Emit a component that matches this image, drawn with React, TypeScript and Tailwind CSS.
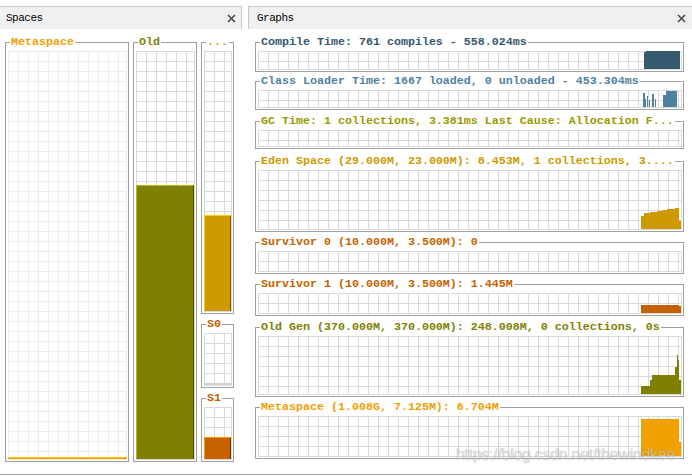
import React from "react";

const mono = "font-['Liberation_Mono','DejaVu_Sans_Mono',monospace]";

const gridDark =
  "bg-[linear-gradient(to_right,#d9d9d9_1px,transparent_1px),linear-gradient(to_bottom,#d9d9d9_1px,transparent_1px)] bg-[length:10px_10px] border-r border-b border-[#d9d9d9]";
const gridLight =
  "bg-[linear-gradient(to_right,#ececec_1px,transparent_1px),linear-gradient(to_bottom,#ececec_1px,transparent_1px)] bg-[length:10px_10px] border-r border-b border-[#ececec]";

function CloseIcon() {
  return (
    <svg width="9" height="9" viewBox="0 0 9 9">
      <path d="M1 1L8 8M8 1L1 8" stroke="#4a4a4a" strokeWidth="1.6" />
    </svg>
  );
}

function Legend({ text, color }: { text: string; color: string }) {
  return (
    <legend
      className={`ml-[4px] px-[1px] leading-[12px] text-[11.67px] font-bold whitespace-pre ${mono} ${color}`}
    >
      {text}
    </legend>
  );
}

function SpaceBox({
  label,
  color,
  className,
  gridH,
  grid,
  children,
}: {
  label: string;
  color: string;
  className: string;
  gridH: string;
  grid: string;
  children?: React.ReactNode;
}) {
  return (
    <fieldset className={`border border-[#a0a0a0] min-w-0 ${className}`}>
      <Legend text={label} color={color} />
      <div className="pt-[3px] pl-[2px] pr-[1px] pb-[1px]">
        <div className={`${gridH} flex flex-col justify-end ${grid}`}>{children}</div>
      </div>
    </fieldset>
  );
}

type G = {
  label: string;
  color: string;
  mt: string;
  h: string;
  ch: number;
  fill: React.ReactNode;
};

const graphs: G[] = [
  {
    label: "Compile Time: 761 compiles - 558.024ms",
    color: "text-[#36566e]",
    mt: "mt-0",
    h: "h-[19px]",
    ch: 18,
    fill: <path d="M5 18V1H7V0H41V18Z" fill="#35596d" />,
  },
  {
    label: "Class Loader Time: 1667 loaded, 0 unloaded - 453.304ms",
    color: "text-[#4f80a0]",
    mt: "mt-[3px]",
    h: "h-[18px]",
    ch: 17,
    fill: (
      <g fill="#4f80a0">
        <rect x="4" y="3" width="2" height="14" />
        <rect x="6" y="9" width="1" height="8" />
        <rect x="8" y="6" width="1" height="11" />
        <rect x="10" y="10" width="1" height="7" />
        <rect x="13" y="4" width="2" height="13" />
        <rect x="16" y="9" width="1" height="8" />
        <rect x="24" y="5" width="3" height="12" />
        <rect x="27" y="1" width="11" height="16" />
      </g>
    ),
  },
  {
    label: "GC Time: 1 collections, 3.381ms Last Cause: Allocation F...",
    color: "text-[#999900]",
    mt: "mt-[5px]",
    h: "h-[17px]",
    ch: 16,
    fill: null,
  },
  {
    label: "Eden Space (29.000M, 23.000M): 8.453M, 1 collections, 3....",
    color: "text-[#cc9900]",
    mt: "mt-[6px]",
    h: "h-[60px]",
    ch: 59,
    fill: (
      <polygon
        points="2,59 2,46 5,46 5,43 11,43 11,42 18,42 18,41 24,41 24,40 28,40 28,39 36,39 36,38 40,38 40,51 42,51 42,59"
        fill="#cc9900"
      />
    ),
  },
  {
    label: "Survivor 0 (10.000M, 3.500M): 0",
    color: "text-[#c46200]",
    mt: "mt-[4px]",
    h: "h-[21px]",
    ch: 20,
    fill: null,
  },
  {
    label: "Survivor 1 (10.000M, 3.500M): 1.445M",
    color: "text-[#c46200]",
    mt: "mt-[4px]",
    h: "h-[21px]",
    ch: 20,
    fill: <polygon points="2,20 2,12 40,12 40,13 42,13 42,20" fill="#c46200" />,
  },
  {
    label: "Old Gen (370.000M, 370.000M): 248.008M, 0 collections, 0s",
    color: "text-[#808000]",
    mt: "mt-[5px]",
    h: "h-[59px]",
    ch: 58,
    fill: (
      <polygon
        points="2,58 2,50 11,50 11,44 13,44 13,39 36,39 36,31 38,31 38,19 39,19 39,24 40,24 40,44 42,44 42,58"
        fill="#808000"
      />
    ),
  },
  {
    label: "Metaspace (1.008G, 7.125M): 6.704M",
    color: "text-[#f0a000]",
    mt: "mt-[4px]",
    h: "h-[41px]",
    ch: 40,
    fill: <polygon points="2,40 2,3 40,3 40,26 42,26 42,40" fill="#f0a000" />,
  },
];

export default function App() {
  return (
    <div className="relative w-[692px] h-[476px] bg-white overflow-hidden flex flex-col">
      <div className="h-[474px] flex">
        {/* Spaces panel */}
        <div className="w-[242px] flex flex-col pt-[6px]">
          <div className="h-[23px] bg-[#f0f0f0] border-t border-r border-[#c8c8c8] flex items-center justify-between pl-[6px] pr-[5px]">
            <span className={`text-[11px] tracking-[-0.5px] text-black ${mono}`}>Spaces</span>
            <CloseIcon />
          </div>
          <div className="flex gap-[4px] pl-[5px] pt-[7px]">
            <SpaceBox label="Metaspace" color="text-[#f0a000]" className="w-[124px]" gridH="h-[409px]" grid={gridLight}>
              <div className="h-[2px] bg-[#f0a000] border-t border-[#ffc000] border-r border-r-[#a06000]" />
            </SpaceBox>
            <SpaceBox label="Old" color="text-[#808000]" className="w-[64px]" gridH="h-[409px]" grid={gridDark}>
              <div className="h-[274px] bg-[#808000] border-t border-l border-[#b8b800] border-r border-r-[#4a4a00]" />
            </SpaceBox>
            <div className="w-[33px] flex flex-col gap-[4px]">
              <SpaceBox label="..." color="text-[#cc9900]" className="" gridH="h-[261px]" grid={gridDark}>
                <div className="h-[96px] bg-[#cc9900] border-t border-l border-[#ffcc00] border-r border-r-[#7a5c00]" />
              </SpaceBox>
              <SpaceBox label="S0" color="text-[#c46200]" className="" gridH="h-[53px]" grid={gridDark}>
                <div className="h-[2px] bg-[#d0d0d0]" />
              </SpaceBox>
              <SpaceBox label="S1" color="text-[#c46200]" className="" gridH="h-[53px]" grid={gridDark}>
                <div className="h-[22px] bg-[#c46200] border-t border-l border-[#ff9000] border-r border-r-[#6a3400]" />
              </SpaceBox>
            </div>
          </div>
        </div>

        {/* Graphs panel */}
        <div className="ml-[6px] flex-1 flex flex-col pt-[6px]">
          <div className="h-[23px] bg-[#f0f0f0] border-t border-l border-[#c8c8c8] flex items-center justify-between pl-[8px] pr-[6px]">
            <span className={`text-[11px] tracking-[-0.5px] text-black ${mono}`}>Graphs</span>
            <CloseIcon />
          </div>
          <div className="flex flex-col pl-[7px] pt-[7px] w-[436px]">
            {graphs.map((g, i) => (
              <fieldset key={i} className={`border border-[#a0a0a0] min-w-0 ${g.mt}`}>
                <Legend text={g.label} color={g.color} />
                <div className="pt-[3px] pl-[2px] pr-[1px] pb-[1px]">
                  <div className={`${g.h} flex justify-end items-end ${gridDark}`}>
                    {g.fill && (
                      <svg width="42" height={g.ch} viewBox={`0 0 42 ${g.ch}`} className="block">
                        {g.fill}
                      </svg>
                    )}
                  </div>
                </div>
              </fieldset>
            ))}
          </div>
        </div>
      </div>
      <div className="h-px bg-[#a0a0a0]" />

      <div className="absolute left-[456px] top-[443px] text-[16px] tracking-[-0.3px] font-['Liberation_Sans',Arial,sans-serif] text-[rgba(255,255,255,0.55)] [text-shadow:0_0_1px_rgba(0,0,0,0.35)] pointer-events-none whitespace-nowrap">
        https://blog.csdn.net/thewindkee
      </div>
    </div>
  );
}
